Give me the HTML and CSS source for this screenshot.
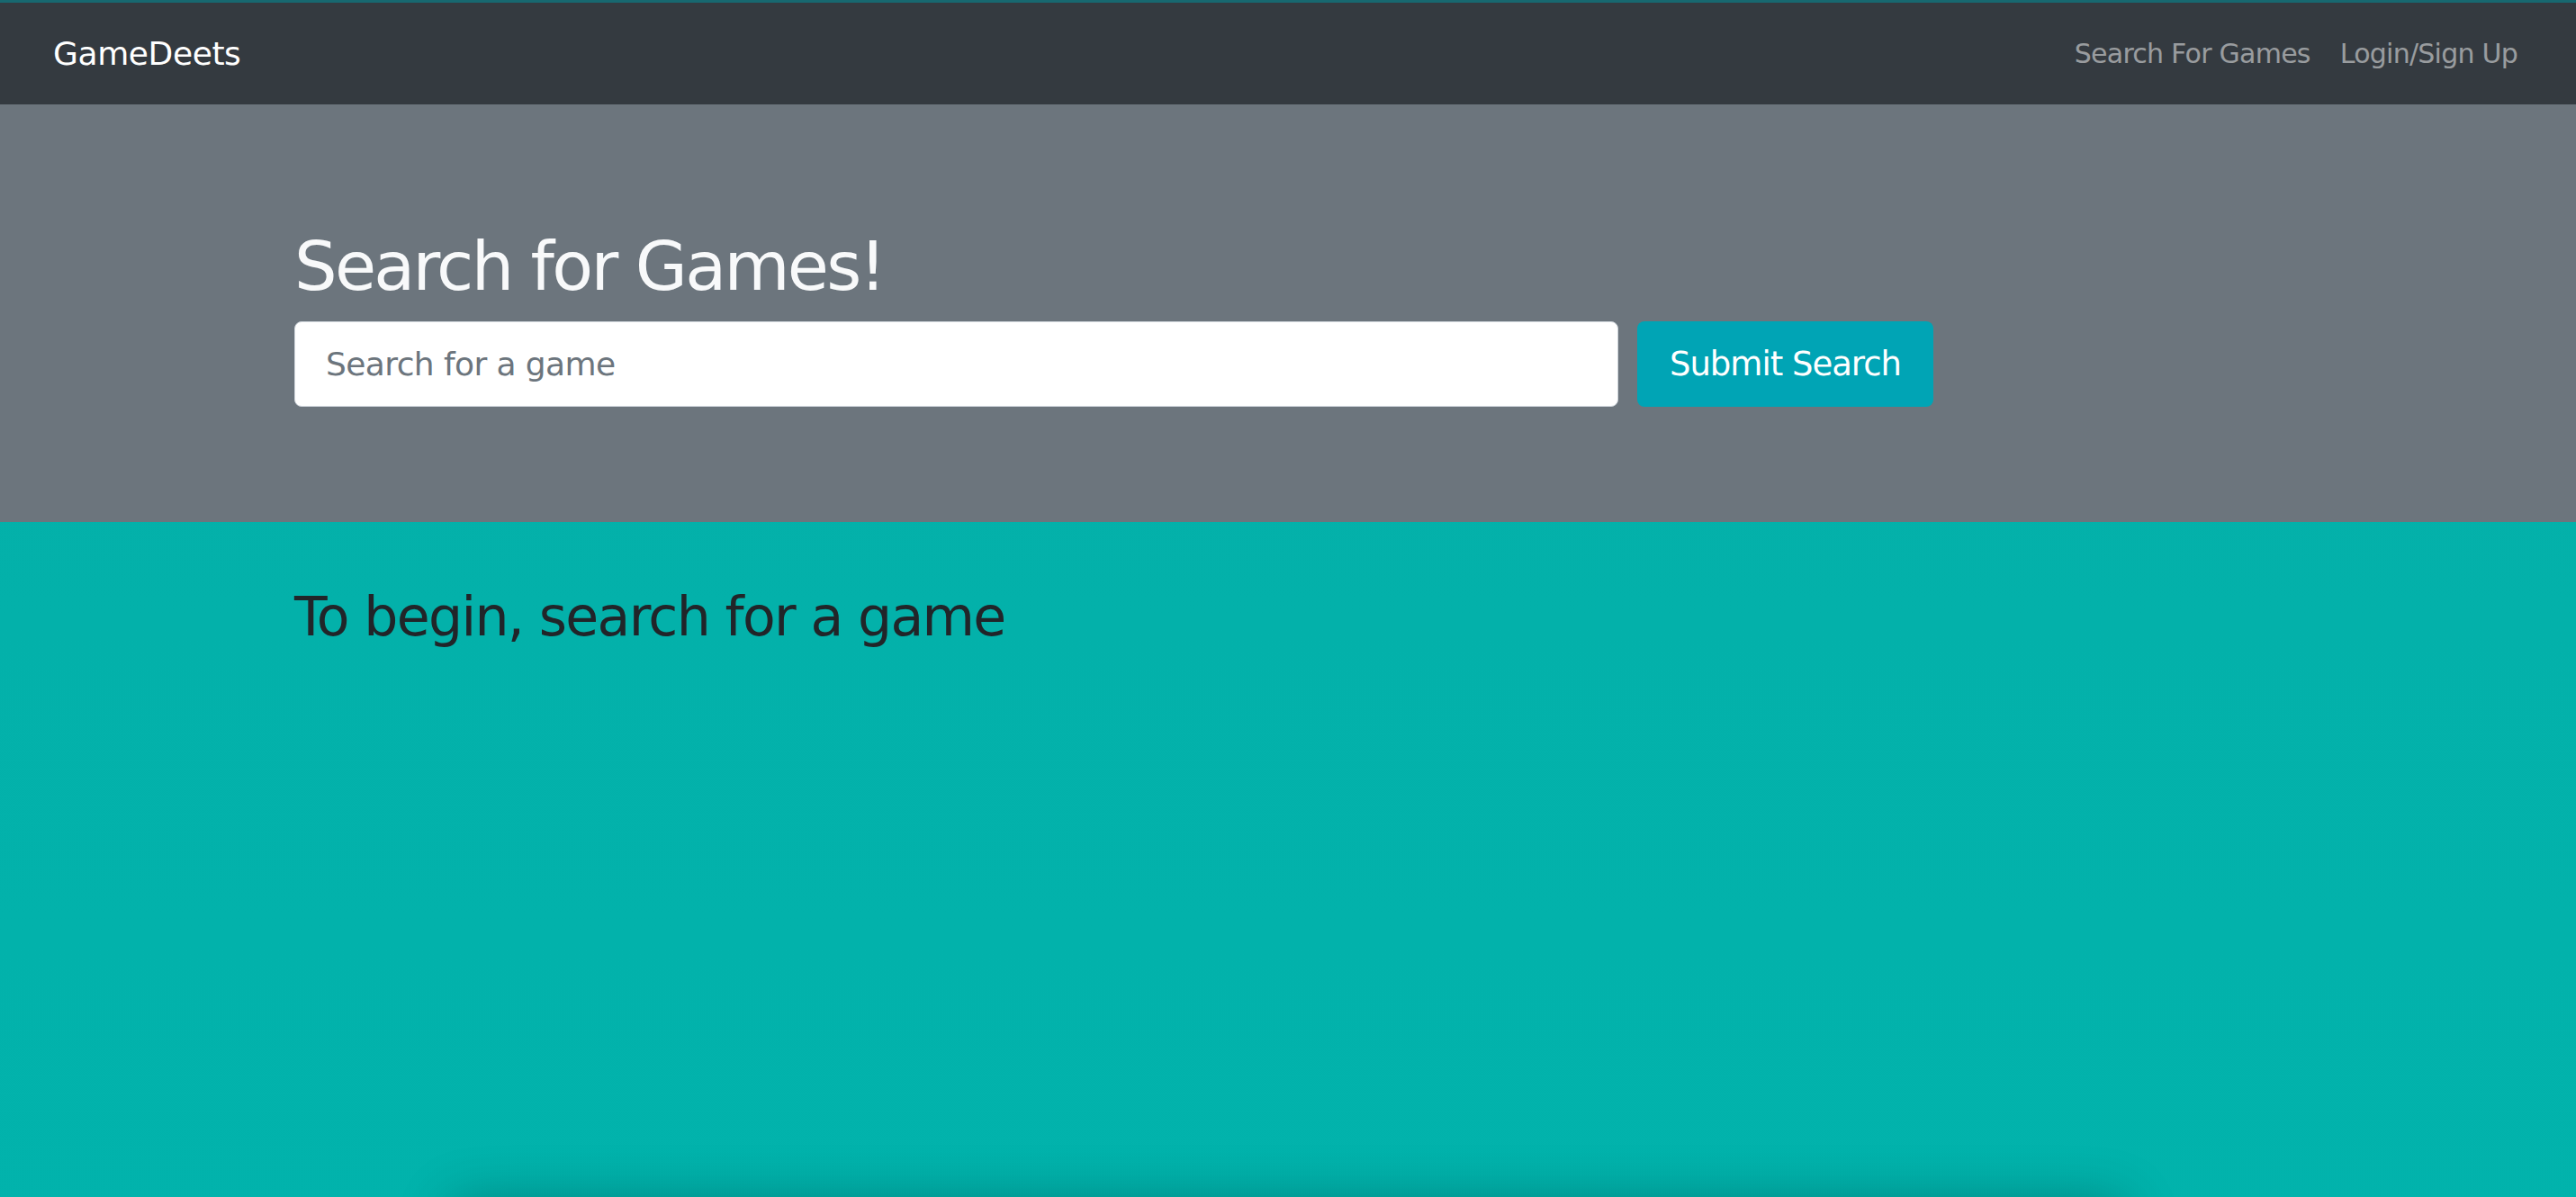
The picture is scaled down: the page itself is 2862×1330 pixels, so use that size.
FILE: index.html
```html
<!DOCTYPE html>
<html lang="en">
<head>
<meta charset="utf-8">
<title>GameDeets</title>
<link rel="stylesheet" href="styles.css">
</head>
<body>
<nav class="navbar">
  <a class="brand" href="#">GameDeets</a>
  <div class="nav-links">
    <a class="nav-link" href="#">Search For Games</a>
    <a class="nav-link" href="#">Login/Sign Up</a>
  </div>
</nav>
<header class="hero">
  <div class="container">
    <h1 class="hero-title">Search for Games!</h1>
    <form class="search-form">
      <input class="search-input" type="text" placeholder="Search for a game">
      <button class="search-btn" type="button">Submit Search</button>
    </form>
  </div>
</header>
<main class="content">
  <div class="container">
    <h3 class="begin">To begin, search for a game</h3>
  </div>
  <div class="results"></div>
</main>
</body>
</html>
```
FILE: styles.css
```css
html, body {
  margin: 0;
  padding: 0;
}
body {
  font-family: "DejaVu Sans", "Noto Sans", sans-serif;
  background: linear-gradient(180deg, #05afa8 0%, #00b4ad 100%);
  min-height: 1330px;
  overflow: hidden;
}
.navbar {
  display: flex;
  align-items: center;
  justify-content: space-between;
  height: 113px;
  border-top: 3px solid #176870;
  background: #343a40;
  padding: 0 65px 0 59px;
}
.brand {
  color: #ffffff;
  text-decoration: none;
  font-size: 36px;
  letter-spacing: -0.4px;
}
.nav-links {
  display: flex;
  gap: 33px;
}
.nav-link {
  color: rgba(255, 255, 255, 0.5);
  text-decoration: none;
  font-size: 30px;
  letter-spacing: -0.75px;
}
.container {
  width: 2208px;
  margin: 0 auto;
}
.hero {
  background: #6c757d;
  padding: 135px 0 128px;
}
.hero-title {
  margin: 0 0 16px;
  font-size: 75px;
  line-height: 90px;
  font-weight: normal;
  color: #f8f9fa;
  letter-spacing: -2.7px;
}
.search-form {
  display: flex;
  gap: 21px;
  margin: 0;
}
.search-input {
  width: 1471px;
  height: 95px;
  box-sizing: border-box;
  border: 1px solid #ced4da;
  border-radius: 8px;
  padding: 0 34px;
  font-family: inherit;
  font-size: 36px;
  letter-spacing: -0.6px;
  color: #495057;
  background: #fff;
  outline: none;
}
.search-input::placeholder {
  color: #6c757d;
}
.search-btn {
  width: 329px;
  height: 95px;
  border: none;
  border-radius: 8px;
  background: #00a4b5;
  color: #fff;
  font-family: inherit;
  font-size: 37px;
  letter-spacing: -1px;
  padding: 0;
}
.content {
  padding-top: 69px;
}
.begin {
  margin: 0;
  font-size: 60px;
  line-height: 72px;
  font-weight: normal;
  color: #212529;
  letter-spacing: -1.65px;
}
.results {
  width: 1860px;
  height: 400px;
  margin: 614px auto 0;
  border-radius: 16px;
  background: #00b4ad;
  box-shadow: 0 0 60px rgba(0, 0, 0, 0.28);
}
```
